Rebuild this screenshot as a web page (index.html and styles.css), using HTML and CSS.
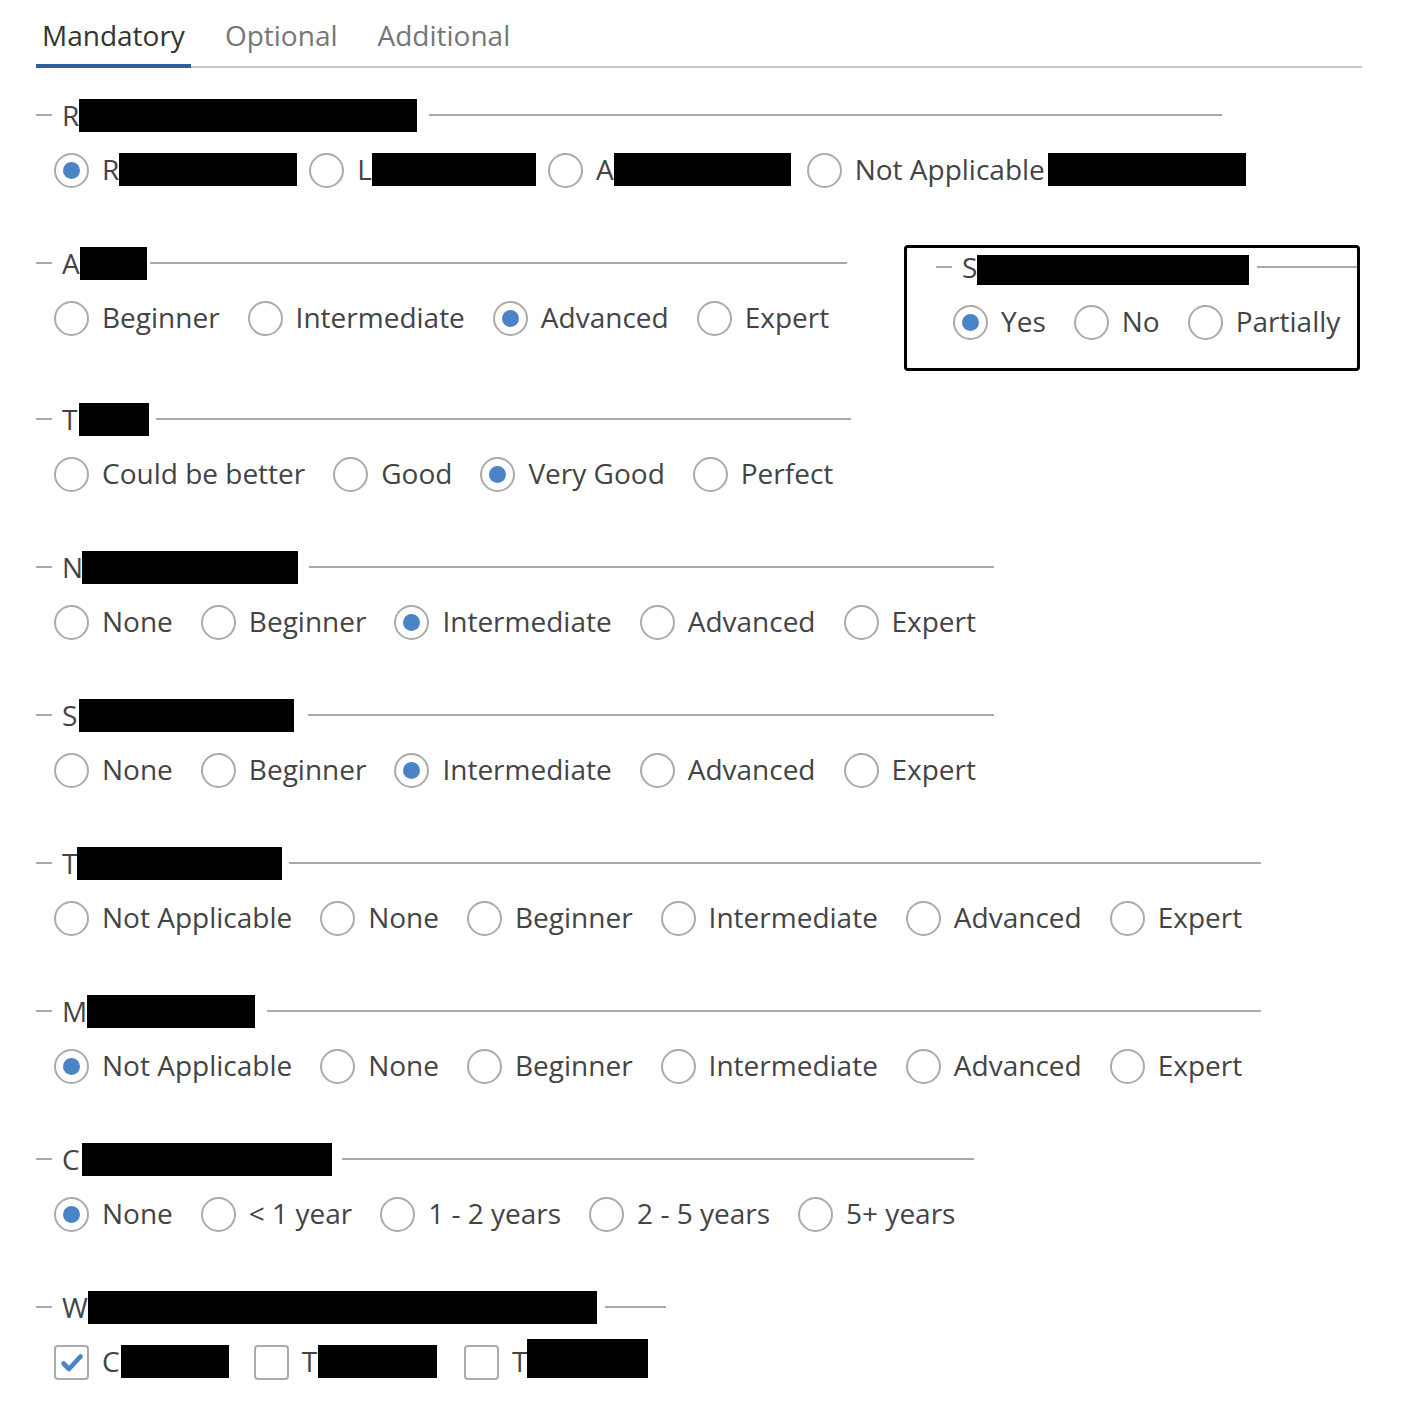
FILE: index.html
```html
<!DOCTYPE html>
<html lang="en">
<head>
<meta charset="utf-8">
<title>Form</title>
<link rel="stylesheet" href="styles.css">
</head>
<body>
<div class="page">
  <div class="tabs">
    <div class="tab tab-active">Mandatory</div>
    <div class="tab">Optional</div>
    <div class="tab">Additional</div>
  </div>

  <div class="form">
    <div class="group w-1186">
      <div class="legend"><span class="legend-text pr-12">R<span class="redact r-338"></span></span></div>
      <div class="opts">
        <label class="opt opt-tight"><span class="radio checked"></span><span class="lbl">R<span class="redact r-178"></span></span></label>
        <label class="opt opt-tight"><span class="radio"></span><span class="lbl">L<span class="redact r-164"></span></span></label>
        <label class="opt opt-tight2"><span class="radio"></span><span class="lbl">A<span class="redact r-177"></span></span></label>
        <label class="opt"><span class="radio"></span><span class="lbl">Not Applicable<span class="redact r-198 gap-3"></span></span></label>
      </div>
    </div>

    <div class="split">
      <div class="group w-811 group-flush">
        <div class="legend"><span class="legend-text pr-3">A<span class="redact r-67"></span></span></div>
        <div class="opts">
          <label class="opt"><span class="radio"></span><span class="lbl">Beginner</span></label>
          <label class="opt"><span class="radio"></span><span class="lbl">Intermediate</span></label>
          <label class="opt"><span class="radio checked"></span><span class="lbl">Advanced</span></label>
          <label class="opt"><span class="radio"></span><span class="lbl">Expert</span></label>
        </div>
      </div>
      <div class="box">
        <div class="legend"><span class="legend-text pr-8">S<span class="redact r-272 box-redact"></span></span></div>
        <div class="opts">
          <label class="opt"><span class="radio checked"></span><span class="lbl">Yes</span></label>
          <label class="opt"><span class="radio"></span><span class="lbl">No</span></label>
          <label class="opt"><span class="radio"></span><span class="lbl">Partially</span></label>
        </div>
      </div>
    </div>

    <div class="group w-815">
      <div class="legend"><span class="legend-text pr-7">T<span class="redact r-70 gap-2"></span></span></div>
      <div class="opts">
        <label class="opt"><span class="radio"></span><span class="lbl">Could be better</span></label>
        <label class="opt"><span class="radio"></span><span class="lbl">Good</span></label>
        <label class="opt"><span class="radio checked"></span><span class="lbl">Very Good</span></label>
        <label class="opt"><span class="radio"></span><span class="lbl">Perfect</span></label>
      </div>
    </div>

    <div class="group w-958">
      <div class="legend"><span class="legend-text pr-11">N<span class="redact r-216 gap-n1"></span></span></div>
      <div class="opts">
        <label class="opt"><span class="radio"></span><span class="lbl">None</span></label>
        <label class="opt"><span class="radio"></span><span class="lbl">Beginner</span></label>
        <label class="opt"><span class="radio checked"></span><span class="lbl">Intermediate</span></label>
        <label class="opt"><span class="radio"></span><span class="lbl">Advanced</span></label>
        <label class="opt"><span class="radio"></span><span class="lbl">Expert</span></label>
      </div>
    </div>

    <div class="group w-958">
      <div class="legend"><span class="legend-text pr-14">S<span class="redact r-215 gap-2"></span></span></div>
      <div class="opts">
        <label class="opt"><span class="radio"></span><span class="lbl">None</span></label>
        <label class="opt"><span class="radio"></span><span class="lbl">Beginner</span></label>
        <label class="opt"><span class="radio checked"></span><span class="lbl">Intermediate</span></label>
        <label class="opt"><span class="radio"></span><span class="lbl">Advanced</span></label>
        <label class="opt"><span class="radio"></span><span class="lbl">Expert</span></label>
      </div>
    </div>

    <div class="group w-1225">
      <div class="legend"><span class="legend-text pr-7">T<span class="redact r-205"></span></span></div>
      <div class="opts">
        <label class="opt"><span class="radio"></span><span class="lbl">Not Applicable</span></label>
        <label class="opt"><span class="radio"></span><span class="lbl">None</span></label>
        <label class="opt"><span class="radio"></span><span class="lbl">Beginner</span></label>
        <label class="opt"><span class="radio"></span><span class="lbl">Intermediate</span></label>
        <label class="opt"><span class="radio"></span><span class="lbl">Advanced</span></label>
        <label class="opt"><span class="radio"></span><span class="lbl">Expert</span></label>
      </div>
    </div>

    <div class="group w-1225">
      <div class="legend"><span class="legend-text pr-12">M<span class="redact r-168"></span></span></div>
      <div class="opts">
        <label class="opt"><span class="radio checked"></span><span class="lbl">Not Applicable</span></label>
        <label class="opt"><span class="radio"></span><span class="lbl">None</span></label>
        <label class="opt"><span class="radio"></span><span class="lbl">Beginner</span></label>
        <label class="opt"><span class="radio"></span><span class="lbl">Intermediate</span></label>
        <label class="opt"><span class="radio"></span><span class="lbl">Advanced</span></label>
        <label class="opt"><span class="radio"></span><span class="lbl">Expert</span></label>
      </div>
    </div>

    <div class="group w-938">
      <div class="legend"><span class="legend-text">C<span class="redact r-250 gap-2"></span></span></div>
      <div class="opts">
        <label class="opt"><span class="radio checked"></span><span class="lbl">None</span></label>
        <label class="opt"><span class="radio"></span><span class="lbl">&lt; 1 year</span></label>
        <label class="opt"><span class="radio"></span><span class="lbl">1 - 2 years</span></label>
        <label class="opt"><span class="radio"></span><span class="lbl">2 - 5 years</span></label>
        <label class="opt"><span class="radio"></span><span class="lbl">5+ years</span></label>
      </div>
    </div>

    <div class="group w-630">
      <div class="legend"><span class="legend-text pr-8">W<span class="redact r-509"></span></span></div>
      <div class="opts">
        <label class="opt opt-cb1"><span class="check checked"><svg viewBox="0 0 35 35" width="35" height="35"><path d="M9.5 18.5 L15 24 L26.5 11.5" fill="none" stroke="#4a84c6" stroke-width="4.6" stroke-linecap="round" stroke-linejoin="round"/></svg></span><span class="lbl">C<span class="redact r-108 gap-1"></span></span></label>
        <label class="opt opt-cb2"><span class="check"></span><span class="lbl">T<span class="redact r-119 gap-1"></span></span></label>
        <label class="opt"><span class="check"></span><span class="lbl">T<span class="redact r-121 tall"></span></span></label>
      </div>
    </div>
  </div>
</div>
</body>
</html>
```

FILE: styles.css
```css
html, body {
  margin: 0;
  padding: 0;
  background: #ffffff;
}

body {
  font-family: "Open Sans", "Noto Sans", "Liberation Sans", sans-serif;
  color: #444444;
}

.page {
  padding: 0 42px 40px 36px;
}

/* Tabs */
.tabs {
  display: flex;
  border-bottom: 2px solid #c8c8c8;
}

.tab {
  font-size: 28px;
  line-height: 40px;
  padding: 15px 6px 9px;
  margin-right: 28px;
  margin-bottom: -2px;
  border-bottom: 4px solid transparent;
  color: #767676;
}

.tab-active {
  color: #333333;
  border-bottom-color: #30609a;
}

/* Form */
.form {
  margin-top: 30px;
}

.group {
  margin-bottom: 56px;
}

.group-flush {
  margin-bottom: 0;
}

.w-1186 { width: 1186px; }
.w-811 { width: 811px; }
.w-815 { width: 815px; }
.w-958 { width: 958px; }
.w-1225 { width: 1225px; }
.w-938 { width: 938px; }
.w-630 { width: 630px; }

.legend {
  display: flex;
  align-items: center;
  height: 34px;
}

.legend::before {
  content: "";
  flex: 0 0 16px;
  height: 2px;
  background: #a9a9a9;
}

.legend::after {
  content: "";
  flex: 1 1 auto;
  height: 2px;
  background: #a9a9a9;
}

.legend-text {
  display: flex;
  align-items: center;
  font-size: 28px;
  line-height: 34px;
  padding: 0 10px;
  color: #444444;
}

.pr-3 { padding-right: 3px; }
.pr-7 { padding-right: 7px; }
.pr-8 { padding-right: 8px; }
.pr-11 { padding-right: 11px; }
.pr-12 { padding-right: 12px; }
.pr-14 { padding-right: 14px; }

.redact {
  display: inline-block;
  height: 33px;
  background: #000000;
}

.gap-5 { margin-left: 5px; }
.gap-3 { margin-left: 3px; }
.gap-2 { margin-left: 2px; }
.gap-1 { margin-left: 1px; }
.gap-n1 { margin-left: -1px; }
.tall { height: 39px; margin-top: -5px; }
.box-redact { height: 30px; margin-top: 6px; }

.r-338 { width: 338px; }
.r-67 { width: 67px; }
.r-70 { width: 70px; }
.r-216 { width: 216px; }
.r-215 { width: 215px; }
.r-205 { width: 205px; }
.r-168 { width: 168px; }
.r-250 { width: 250px; }
.r-509 { width: 509px; }
.r-272 { width: 272px; }
.r-178 { width: 178px; }
.r-164 { width: 164px; }
.r-177 { width: 177px; }
.r-198 { width: 198px; }
.r-108 { width: 108px; }
.r-119 { width: 119px; }
.r-121 { width: 121px; }

.opts {
  display: flex;
  align-items: center;
  height: 40px;
  margin-top: 18px;
  padding-left: 18px;
}

.opt {
  display: flex;
  align-items: center;
  margin-right: 28px;
  font-size: 28px;
  line-height: 40px;
  color: #444444;
  white-space: nowrap;
}

.opt-tight { margin-right: 12px; }
.opt-tight2 { margin-right: 16px; }
.opt-cb1 { margin-right: 25px; }
.opt-cb2 { margin-right: 27px; }

.lbl {
  display: flex;
  align-items: center;
  margin-top: -2px;
}

.radio {
  flex: 0 0 35px;
  width: 35px;
  height: 35px;
  box-sizing: border-box;
  border: 2px solid #ababab;
  border-radius: 50%;
  margin-right: 13px;
  display: flex;
  align-items: center;
  justify-content: center;
}

.radio.checked::after {
  content: "";
  width: 17px;
  height: 17px;
  border-radius: 50%;
  background: #4a84c6;
}

.check {
  flex: 0 0 35px;
  width: 35px;
  height: 35px;
  box-sizing: border-box;
  border: 2px solid #ababab;
  border-radius: 4px;
  margin-right: 13px;
  position: relative;
}

.check svg {
  position: absolute;
  left: -2px;
  top: -2px;
}

/* Side box */
.split {
  display: flex;
  align-items: flex-start;
  gap: 57px;
  margin-bottom: 31px;
}

.box {
  width: 456px;
  box-sizing: border-box;
  margin-top: -1px;
  border: 3px solid #000000;
  border-radius: 4px;
  padding: 2px 0 26px 29px;
}

.box .opts {
  padding-left: 17px;
}
```
